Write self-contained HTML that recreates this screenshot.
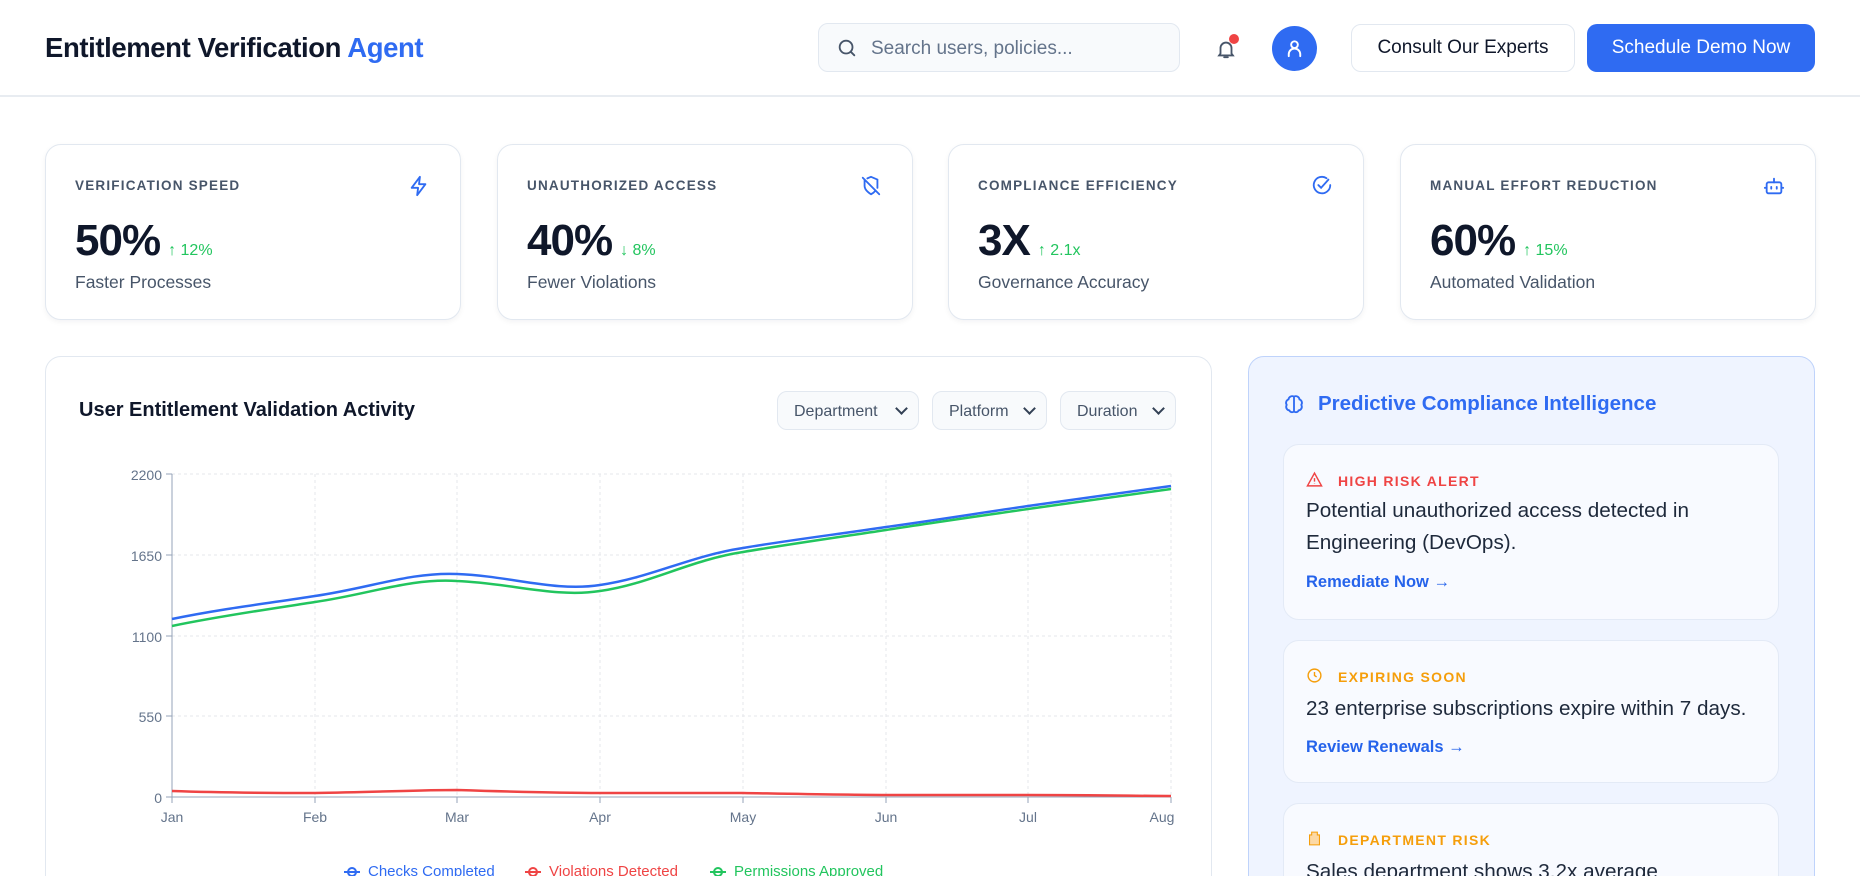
<!DOCTYPE html>
<html style="overflow:hidden;height:876px"><head><meta charset="utf-8"><style>
*{box-sizing:border-box;margin:0;padding:0}
body{width:1860px;height:876px;overflow:hidden;background:#fff;font-family:"Liberation Sans",sans-serif;color:#0f172a;position:relative}
.abs{position:absolute}
.hdr{position:absolute;left:0;top:0;width:1860px;height:97px;border-bottom:2px solid #e8ecf1;background:#fff}
.title{left:45px;top:32px;font-size:27.5px;font-weight:700;letter-spacing:-0.4px}
.search{left:818px;top:23px;width:362px;height:49px;border:1px solid #e2e8f0;border-radius:10px;background:#f8fafc}
.search span{position:absolute;left:52px;top:14px;font-size:19px;color:#64748b}
.btn{top:24px;height:48px;border-radius:10px;font-size:19px;display:flex;align-items:center;justify-content:center}
.card{position:absolute;top:144px;width:416px;height:176px;border:1px solid #e2e8f0;border-radius:16px;background:#fff;box-shadow:0 2px 6px rgba(15,23,42,.05)}
.card .lb{position:absolute;left:29px;top:33px;font-size:13.5px;font-weight:700;letter-spacing:1.2px;color:#475569}
.card .v{position:absolute;left:29px;top:71px;font-size:44px;font-weight:700;letter-spacing:-1px;color:#0f172a}
.card .v small{font-size:16px;font-weight:400;color:#22c55e;letter-spacing:0;margin-left:8px}
.card .s{position:absolute;left:29px;top:127px;font-size:17.5px;color:#475569}
.card svg{position:absolute;right:30px;top:30px}
.chart{left:45px;top:356px;width:1167px;height:600px;border:1px solid #e2e8f0;border-radius:16px;background:#fff}
.dd{top:391px;height:39px;border:1px solid #e2e8f0;border-radius:10px;background:#f8fafc;font-size:16px;color:#475569;padding:11px 0 0 16px}
.dd:after{content:"";position:absolute;right:12px;top:12px;width:7px;height:7px;border-right:2px solid #334155;border-bottom:2px solid #334155;transform:rotate(45deg)}
.panel{left:1248px;top:356px;width:567px;height:600px;border:1.5px solid #bfd3fb;border-radius:16px;background:#eff4ff}
.ic{position:absolute;left:1283px;width:496px;background:#f8faff;border:1px solid #e3eaf6;border-radius:16px}
.ic .l{position:absolute;left:54px;top:28px;font-size:14px;font-weight:700;letter-spacing:1.3px}
.ic svg{position:absolute;left:22px;top:26px}
.ic .t{position:absolute;left:22px;font-size:20.7px;line-height:32px;color:#1e293b;white-space:nowrap}
.ic .a{position:absolute;left:22px;font-size:16.5px;font-weight:700;color:#2563eb}
</style></head><body>
<div class="hdr"></div>
<div class="abs title">Entitlement Verification <span style="color:#2f6bf2">Agent</span></div>
<div class="abs search"><svg class="abs" style="left:17px;top:13px" width="22" height="22" viewBox="0 0 24 24" fill="none" stroke="#475569" stroke-width="2" stroke-linecap="round"><circle cx="11" cy="11" r="7"/><path d="M20 20l-4-4"/></svg><span>Search users, policies...</span></div>
<svg class="abs" style="left:1215px;top:37px" width="22" height="24" viewBox="0 0 24 24" fill="none" stroke="#475569" stroke-width="2" stroke-linecap="round"><path d="M6 17V11a6 6 0 0112 0v6l1.5 2h-15z"/><path d="M10 21h4"/></svg>
<div class="abs" style="left:1229px;top:34px;width:10px;height:10px;border-radius:50%;background:#ef4444"></div>
<div class="abs" style="left:1272px;top:26px;width:45px;height:45px;border-radius:50%;background:#2f6bf2"></div>
<svg class="abs" style="left:1283px;top:37px" width="23" height="23" viewBox="0 0 24 24" fill="none" stroke="#fff" stroke-width="2" stroke-linecap="round"><circle cx="12" cy="8" r="3.5"/><path d="M6 20v-2a6 6 0 0112 0v2"/></svg>
<div class="abs btn" style="left:1351px;width:224px;border:1px solid #e2e8f0;background:#fff;color:#0f172a">Consult Our Experts</div>
<div class="abs btn" style="left:1587px;width:228px;background:#2f6bf2;color:#fff">Schedule Demo Now</div>

<div class="card" style="left:45px"><div class="lb">VERIFICATION SPEED</div><svg width="22" height="22" viewBox="0 0 24 24" fill="none" stroke="#2f6bf2" stroke-width="2" stroke-linejoin="round"><path d="M13 2L4 14h7l-1 8 9-12h-7z"/></svg><div class="v">50%<small>↑ 12%</small></div><div class="s">Faster Processes</div></div>
<div class="card" style="left:497px"><div class="lb">UNAUTHORIZED ACCESS</div><svg width="22" height="22" viewBox="0 0 24 24" fill="none" stroke="#2f6bf2" stroke-width="2" stroke-linecap="round"><path d="M5 5v7c0 5 7 9 7 9s3-1.5 5-4M19 14V5l-7-3-4 1.7"/><path d="M3 3l18 18"/></svg><div class="v">40%<small>↓ 8%</small></div><div class="s">Fewer Violations</div></div>
<div class="card" style="left:948px"><div class="lb">COMPLIANCE EFFICIENCY</div><svg width="22" height="22" viewBox="0 0 24 24" fill="none" stroke="#2f6bf2" stroke-width="2" stroke-linecap="round"><path d="M21 11a9 9 0 11-4-7.5"/><path d="M8 11l3 3 8-9"/></svg><div class="v">3X<small>↑ 2.1x</small></div><div class="s">Governance Accuracy</div></div>
<div class="card" style="left:1400px"><div class="lb">MANUAL EFFORT REDUCTION</div><svg width="22" height="22" viewBox="0 0 24 24" fill="none" stroke="#2f6bf2" stroke-width="2" stroke-linecap="round"><rect x="4" y="8" width="16" height="12" rx="2"/><path d="M12 8V4M9 13v2M15 13v2M2 14h2M20 14h2"/></svg><div class="v">60%<small>↑ 15%</small></div><div class="s">Automated Validation</div></div>

<div class="abs chart"></div>
<div class="abs" style="left:79px;top:399px;font-size:20px;font-weight:700;color:#0f172a">User Entitlement Validation Activity</div>
<div class="abs dd" style="left:777px;width:142px">Department</div>
<div class="abs dd" style="left:932px;width:115px">Platform</div>
<div class="abs dd" style="left:1060px;width:116px">Duration</div>
<svg class="abs" style="left:0;top:0" width="1240" height="876" font-family="Liberation Sans, sans-serif" font-size="14" fill="#64748b">
<g stroke="#e5e7eb" stroke-dasharray="3 3">
<path d="M172 474H1171M172 555H1171M172 636H1171M172 716H1171"/>
<path d="M315 474V797M457 474V797M600 474V797M743 474V797M886 474V797M1028 474V797M1171 474V797"/>
</g>
<path d="M172 474V797H1171" stroke="#94a3b8" fill="none"/>
<g stroke="#94a3b8"><path d="M166 474h6M166 555h6M166 636h6M166 716h6M166 797h6M172 797v6M315 797v6M457 797v6M600 797v6M743 797v6M886 797v6M1028 797v6M1171 797v6"/></g>
<g text-anchor="end"><text x="162" y="480">2200</text><text x="162" y="561">1650</text><text x="162" y="642">1100</text><text x="162" y="722">550</text><text x="162" y="803">0</text></g>
<g text-anchor="middle"><text x="172" y="822">Jan</text><text x="315" y="822">Feb</text><text x="457" y="822">Mar</text><text x="600" y="822">Apr</text><text x="743" y="822">May</text><text x="886" y="822">Jun</text><text x="1028" y="822">Jul</text><text x="1162" y="822">Aug</text></g>
<path d="M172 619C220 609 270 603 315 596C370 588 410 572 457 574C510 576 555 592 600 585C650 578 690 556 743 548C790 540 840 534 886 527C930 521 980 513 1028 506C1080 499 1130 492 1171 486" stroke="#2f6bf2" stroke-width="2.5" fill="none"/>
<path d="M172 626C220 616 270 609 315 602C370 594 410 578 457 581C510 583 555 598 600 591C650 584 690 560 743 552C790 544 840 537 886 530C930 523 980 516 1028 509C1080 502 1130 495 1171 489" stroke="#22c55e" stroke-width="2.5" fill="none"/>
<path d="M172 791C230 793 290 793 315 793C380 792 420 790 457 790C520 792 560 793 600 793C680 793 720 793 743 793C800 794 850 795 886 795C940 795 990 795 1028 795C1100 795 1140 796 1171 796" stroke="#ef4444" stroke-width="2.5" fill="none"/>
<g font-size="15"><circle cx="352" cy="872" r="4" fill="#fff" stroke="#2f6bf2" stroke-width="2"/><path d="M344 872h16" stroke="#2f6bf2" stroke-width="2"/><text x="368" y="876" fill="#2f6bf2">Checks Completed</text>
<circle cx="533" cy="872" r="4" fill="#fff" stroke="#ef4444" stroke-width="2"/><path d="M525 872h16" stroke="#ef4444" stroke-width="2"/><text x="549" y="876" fill="#ef4444">Violations Detected</text>
<circle cx="718" cy="872" r="4" fill="#fff" stroke="#22c55e" stroke-width="2"/><path d="M710 872h16" stroke="#22c55e" stroke-width="2"/><text x="734" y="876" fill="#22c55e">Permissions Approved</text></g>
</svg>

<div class="abs panel"></div>
<svg class="abs" style="left:1283px;top:393px" width="22" height="22" viewBox="0 0 24 24" fill="none" stroke="#2f6bf2" stroke-width="2"><path d="M12 3v18M12 4a4 4 0 00-6 3 4 4 0 00-2 6 4 4 0 003 6 3 3 0 005 1M12 4a4 4 0 016 3 4 4 0 012 6 4 4 0 01-3 6 3 3 0 01-5 1"/></svg>
<div class="abs" style="left:1318px;top:392px;font-size:20.5px;font-weight:700;color:#2f6bf2">Predictive Compliance Intelligence</div>
<div class="ic" style="top:444px;height:176px"><svg width="17" height="17" viewBox="0 0 24 24" fill="none" stroke="#ef4444" stroke-width="2"><path d="M12 3L2 21h20z"/><path d="M12 10v5M12 17.5v.5"/></svg><div class="l" style="color:#ef4444">HIGH RISK ALERT</div><div class="t" style="top:50px">Potential unauthorized access detected in<br>Engineering (DevOps).</div><div class="a" style="top:128px">Remediate Now →</div></div>
<div class="ic" style="top:640px;height:143px"><svg width="17" height="17" viewBox="0 0 24 24" fill="none" stroke="#f59e0b" stroke-width="2"><circle cx="12" cy="12" r="9"/><path d="M12 7v5l3 2"/></svg><div class="l" style="color:#f59e0b">EXPIRING SOON</div><div class="t" style="top:52px">23 enterprise subscriptions expire within 7 days.</div><div class="a" style="top:97px">Review Renewals →</div></div>
<div class="ic" style="top:803px;height:160px"><svg width="17" height="17" viewBox="0 0 24 24" fill="#fcd9a6" stroke="#f59e0b" stroke-width="1.5"><path d="M8 3h8v4h3v14H5V7h3z"/></svg><div class="l" style="color:#f59e0b">DEPARTMENT RISK</div><div class="t" style="top:52px">Sales department shows 3.2x average</div></div>
</body></html>
